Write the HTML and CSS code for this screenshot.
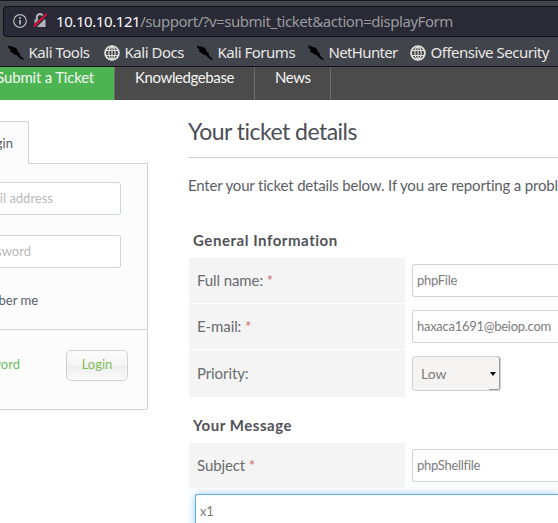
FILE: index.html
```html
<!DOCTYPE html>
<html lang="en">
<head>
<meta charset="utf-8">
<title>Submit a Ticket</title>
<link rel="stylesheet" href="styles.css">
</head>
<body>
<svg class="defs" aria-hidden="true">
  <symbol id="dragon" viewBox="0 0 16 16"><path d="M0 0 1.500 1.500 3.500 1 5 2.300 7.500 2.500 8.800 4 10 7 11.500 8 12 10.500 13.500 12 16 14.200 15.500 15 12.500 13.700 10.500 12 9 10.200 6.500 9.500 5 8.300 3 7.200 1.800 5.500 3 4.800 1 3.500 0 1.500z"/></symbol>
  <symbol id="globe" viewBox="0 0 16 16"><circle cx="8" cy="8" r="6.900" fill="none" stroke="#deded9" stroke-width="1.900"/><path d="M8 1v14M1.500 5.500h13M1.500 10.500h13M8 1C3.800 4 3.800 12 8 15M8 1c4.200 3 4.200 11 0 14" fill="none" stroke="#deded9" stroke-width="1.150"/></symbol>
</svg>
<header class="browser">
  <div class="urlbar">
    <svg class="info" viewBox="0 0 14 14"><circle cx="7" cy="7" r="6.300" fill="none" stroke="#b4b5b9" stroke-width="1.200"/><path d="M6.100 6h1.800v4.500H6.100zM6.100 3.300h1.800V5H6.100z" fill="#b4b5b9"/></svg>
    <svg class="lock" viewBox="0 0 15 15"><path d="M3.800 7V4.500a3.200 3.500 0 0 1 6.400 0V7" fill="none" stroke="#b4b5b9" stroke-width="2"/><path d="M1.500 6.500h11V14h-11z" fill="#b4b5b9"/><path d="M.5 14.500 14 1" stroke="#292a35" stroke-width="4"/><path d="M.8 13.700 13.700.8" stroke="#f20d3c" stroke-width="1.700"/></svg>
    <span class="url"><b>10.10.10.121</b><span class="path">/support/?v=submit_ticket&amp;action=displayForm</span></span>
  </div>
  <nav class="bookmarks">
    <a><svg><use href="#dragon"/></svg><span>Kali Tools</span></a>
    <a><svg><use href="#globe"/></svg><span>Kali Docs</span></a>
    <a><svg><use href="#dragon"/></svg><span>Kali Forums</span></a>
    <a><svg><use href="#dragon"/></svg><span class="hunter">NetHunter</span></a>
    <a><svg><use href="#globe"/></svg><span>Offensive Security</span></a>
  </nav>
</header>
<nav class="menu"><a class="active">Submit a Ticket</a><a class="kb">Knowledgebase</a><a class="news">News</a></nav>
<div class="layout">
  <aside>
    <div class="tab">Login</div>
    <form class="login">
      <div class="fields">
        <div class="input email">Your email address</div>
        <div class="input pass">Password</div>
        <div class="remember">Remember me</div>
      </div>
      <div class="actions"><a>Lost password</a><button type="button">Login</button></div>
    </form>
  </aside>
  <main>
    <h1>Your ticket details</h1>
    <p>Enter your ticket details below. If you are reporting a problem</p>
    <h2 class="general">General Information</h2>
    <div class="row"><label>Full name:&nbsp;<i>*</i></label><div class="input">phpFile</div></div>
    <div class="row"><label>E-mail:&nbsp;<i>*</i></label><div class="input">haxaca1691@beiop.com</div></div>
    <div class="row tall"><label>Priority:</label><div class="select"><span>Low</span><svg viewBox="0 0 6 4"><path d="M0 0h6L3 4z"/></svg></div></div>
    <h2 class="message">Your Message</h2>
    <div class="row"><label>Subject&nbsp;<i>*</i></label><div class="input">phpShellfile</div></div>
    <div class="textarea">x1</div>
  </main>
</div>
</body>
</html>
```
FILE: styles.css
```css
* { box-sizing: border-box; }
body { margin: 0; width: 558px; height: 523px; overflow: hidden; background: #fff; font: 14px/20px Lato, sans-serif; font-variant-ligatures: none; color: #5b5e66; }
.defs { position: absolute; width: 0; height: 0; }
.browser { height: 67px; padding: 5px 0 0 3px; background: #42444c; border-top: 1px solid #15161b; border-bottom: 1px solid #121317; font-family: "Noto Sans", sans-serif; }
.urlbar { display: flex; align-items: center; height: 31px; padding: 0 0 2px 9px; background: #292a35; border: 1px solid #101116; border-right: 0; border-radius: 4px 0 0 4px; }
.info { width: 14px; height: 14px; }
.lock { width: 15px; height: 15px; margin: 0 8px 0 6px; }
.url { font-size: 15px; white-space: nowrap; color: #999a9e; }
.url b { font-weight: 400; color: #fbfbfc; letter-spacing: -.42px; }
.path { letter-spacing: -.46px; }
.bookmarks { display: grid; grid-template-columns: 96px 93px 111px 102px 148px; height: 29px; padding: 1px 0 0 5px; color: #e8e8e5; font-size: 15px; letter-spacing: -.48px; }
.bookmarks a { display: flex; align-items: center; white-space: nowrap; }
.bookmarks svg { width: 16px; height: 16px; margin: 2px 4.5px 0 0; flex: none; }
.hunter { letter-spacing: -.65px; }
.menu { display: flex; height: 33px; background: #4b4b4b; color: #f5f5f5; font-size: 15px; line-height: 20px; letter-spacing: -.4px; }
.menu a { border-right: 1px solid #6c6c6c; white-space: nowrap; }
.menu .active { width: 115px; padding-right: 20px; background: #4cb551; display: flex; justify-content: flex-end; letter-spacing: -.2px; }
.kb { width: 140px; padding-left: 20px; }
.news { width: 76px; padding-left: 20px; }
.layout { display: flex; height: 423px; overflow: hidden; }
aside { width: 148px; margin-right: 40px; padding-top: 21px; flex: none; }
.tab { position: relative; z-index: 1; width: 29px; height: 43px; padding-right: 15px; display: flex; justify-content: flex-end; line-height: 42px; background: #fcfcfc; border: 1px solid #ced2d2; border-width: 1px 1px 0 0; border-radius: 0 3px 0 0; font-size: 13px; }
.login { height: 247px; margin-top: -1px; background: #fcfcfc; border: 1px solid #ced2d2; border-left: 0; border-radius: 0 0 3px 0; }
.fields { height: 166px; padding-top: 18px; border-bottom: 1px solid #d4d6d6; }
.input { height: 33px; background: #fff; border: 1px solid #ced5d5; border-radius: 3px; line-height: 31px; white-space: nowrap; color: #7c7c7c; font-size: 13px; letter-spacing: -.28px; }
.fields .input { width: 121px; border-left: 0; border-radius: 0 3px 3px 0; display: flex; justify-content: flex-end; color: #b9b9b9; margin-bottom: 20px; letter-spacing: 0; }
.fields .email { padding-right: 67px; }
.fields .pass { padding-right: 89px; }
.remember { width: 38px; display: flex; justify-content: flex-end; white-space: nowrap; font-size: 13px; margin-top: 22px; }
.actions { display: flex; align-items: center; height: 70px; color: #69bd5c; font-size: 13px; }
.actions a { width: 20px; margin-top: -2px; display: flex; justify-content: flex-end; white-space: nowrap; }
.actions button { width: 62px; height: 31px; margin-left: 46px; padding: 0 0 2px; border: 1px solid #ced2d2; border-radius: 5px; background: linear-gradient(#fcfcfc, #f4f4f4 50%, #ededed 51%, #fbfbfb); color: #83bd58; font: 13px Lato, sans-serif; }
main { flex: none; width: 370px; }
h1 { margin: 0 0 18px; height: 58px; padding-top: 17px; border-bottom: 1px solid #cfcfcf; font-size: 23px; line-height: 29px; font-weight: 400; letter-spacing: -.53px; color: #4b4e56; }
p { margin: 0; height: 20px; line-height: 19px; font-size: 15px; letter-spacing: -.18px; white-space: nowrap; }
h2 { margin: 0; padding-left: 5px; font-size: 15px; line-height: 20px; font-weight: 700; letter-spacing: .55px; color: #505257; }
.general { margin-top: 34px; margin-bottom: 8px; }
.message { margin-top: 18px; margin-bottom: 8px; }
.row { display: grid; grid-template-columns: 216px 1fr; column-gap: 7px; align-items: center; height: 45px; margin: 0 0 1px 1px; }
.row label { height: 100%; padding: 0 0 2px 8px; display: flex; align-items: center; background: #f4f4f4; color: #686b70; font-size: 15px; letter-spacing: -.1px; }
.row i { font-style: normal; color: #d06a69; }
.row .input { padding-left: 4px; border-right: 0; border-radius: 3px 0 0 3px; }
.tall { height: 47px; }
.select { width: 89px; height: 35px; display: flex; align-items: center; justify-content: space-between; padding: 0 4px 0 8px; border: 1px solid #ccd2d2; border-radius: 3px; background: linear-gradient(#999,#999) right bottom / 11px 1px no-repeat, #f5f4f2; box-shadow: inset -1px 0 #999; color: #7c7c7c; }
.select svg { width: 6px; height: 4px; }
.textarea { height: 60px; margin: 6px 0 0 7px; padding: 6px 4px; border: 1px solid #66afe9; border-right: 0; border-radius: 3px 0 0 3px; background: #fff; box-shadow: 0 0 8px rgba(82,168,236,.6); color: #7c7c7c; font-size: 13px; letter-spacing: -.3px; }
```
